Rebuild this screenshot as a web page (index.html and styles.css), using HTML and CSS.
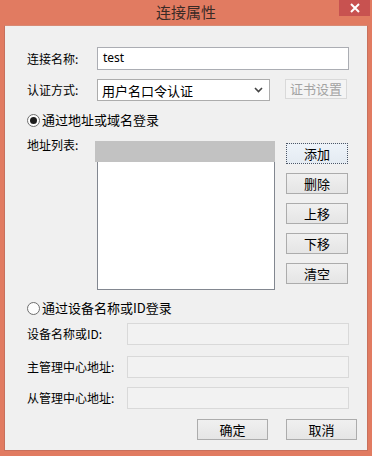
FILE: index.html
```html
<!DOCTYPE html>
<html lang="zh">
<head>
<meta charset="utf-8">
<title>连接属性</title>
<link rel="stylesheet" href="styles.css">
</head>
<body>
<div class="window">
  <div class="titlebar">
    <span class="title">连接属性</span>
    <div class="close">
      <svg width="10" height="10" viewBox="0 0 10 10"><path d="M1 1 L9 9 M9 1 L1 9" stroke="#fff" stroke-width="2"/></svg>
    </div>
  </div>
  <div class="content">
    <div class="row r1">
      <span class="lbl">连接名称:</span>
      <div class="input">test</div>
    </div>
    <div class="row r2">
      <span class="lbl">认证方式:</span>
      <div class="select">
        <span>用户名口令认证</span>
        <svg width="9" height="6" viewBox="0 0 9 6"><path d="M1 1 L4.5 4.5 L8 1" stroke="#444" stroke-width="1.6" fill="none"/></svg>
      </div>
      <div class="btn disabled cert">证书设置</div>
    </div>
    <div class="radio-row r3">
      <span class="radio checked"><span class="dot"></span></span>
      <span>通过地址或域名登录</span>
    </div>
    <div class="list-row">
      <span class="lbl list-lbl">地址列表:</span>
      <div class="listbox"><div class="lb-head"></div></div>
      <div class="btncol">
        <div class="btn focus">添加</div>
        <div class="btn">删除</div>
        <div class="btn">上移</div>
        <div class="btn">下移</div>
        <div class="btn">清空</div>
      </div>
    </div>
    <div class="radio-row r5">
      <span class="radio"></span>
      <span>通过设备名称或ID登录</span>
    </div>
    <div class="row wide r6">
      <span class="lbl">设备名称或ID:</span>
      <div class="input dis"></div>
    </div>
    <div class="row wide r7">
      <span class="lbl">主管理中心地址:</span>
      <div class="input dis"></div>
    </div>
    <div class="row wide r8">
      <span class="lbl">从管理中心地址:</span>
      <div class="input dis"></div>
    </div>
    <div class="footer">
      <div class="btn big">确定</div>
      <div class="btn big">取消</div>
    </div>
  </div>
</div>
</body>
</html>
```
FILE: styles.css
```css
* { box-sizing: border-box; }
html, body { margin: 0; padding: 0; }
body {
  width: 372px;
  height: 456px;
  font-family: "Noto Sans CJK SC", "Noto Sans", sans-serif;
  font-size: 12px;
  color: #000;
  overflow: hidden;
}
.window {
  width: 372px;
  height: 456px;
  background: #e17b61;
  padding: 0 4px 5px 4px;
  display: flex;
  flex-direction: column;
}
.titlebar {
  height: 25px;
  flex: none;
  display: flex;
  align-items: center;
  justify-content: center;
  position: relative;
}
.title {
  font-size: 15px;
  color: #3a2a26;
  line-height: 18px;
  margin-top: -1px;
}
.close {
  position: absolute;
  right: -2px;
  top: 0;
  width: 31px;
  height: 16px;
  background: #c85250;
  display: flex;
  align-items: center;
  justify-content: center;
}
.content {
  flex: 1;
  background: #f0f0f0;
  border: 1px solid #c8705c;
  border-top-color: #d88a74;
  padding: 21px 0 0 22px;
  display: flex;
  flex-direction: column;
}
.row {
  display: flex;
  align-items: center;
}
.lbl {
  width: 70px;
  flex: none;
  line-height: 14px;
  white-space: nowrap;
}
.wide .lbl { width: 100px; }
.input {
  height: 23px;
  width: 252px;
  background: #fff;
  border: 1px solid #abadb3;
  font-family: "Noto Sans", sans-serif;
  font-size: 12px;
  line-height: 19px;
  padding-left: 5px;
}
.r1 { margin-top: 0; }
.r2 { margin-top: 9px; }
.select {
  width: 173px;
  height: 22px;
  background: #fff;
  border: 1px solid #acacac;
  display: flex;
  align-items: center;
  justify-content: space-between;
  padding: 0 6px 0 4px;
  font-size: 13px;
}
.btn {
  width: 62px;
  height: 21px;
  border: 1px solid #acacac;
  background: linear-gradient(#f0f0f0, #e5e5e5);
  display: flex;
  align-items: center;
  justify-content: center;
  font-size: 13px;
  line-height: 14px;
}
.cert {
  margin-left: 15px;
  height: 20px;
  margin-top: -2px;
}
.btn.disabled {
  background: #f4f4f4;
  border-color: #d9d9d9;
  color: #a3a3a3;
}
.btn.focus {
  border: 1px dotted #4d5666;
  background: linear-gradient(#eef3f9, #e4ebf2);
}
.radio-row {
  display: flex;
  align-items: center;
  height: 14px;
  font-size: 13px;
  line-height: 14px;
}
.r3 { margin-top: 12px; }
.r5 { margin-top: 11px; }
.radio {
  width: 13px;
  height: 13px;
  border-radius: 50%;
  border: 1px solid #6e6e6e;
  background: #fdfdfd;
  display: flex;
  align-items: center;
  justify-content: center;
  margin-right: 2px;
  flex: none;
}
.radio .dot {
  width: 7px;
  height: 7px;
  border-radius: 50%;
  background: #1c1c1c;
}
.list-row {
  display: flex;
  align-items: flex-start;
  margin-top: 14px;
}
.list-lbl { margin-top: -3px; }
.listbox {
  width: 178px;
  height: 149px;
  background: #fff;
  border: 1px solid #828790;
}
.lb-head {
  height: 21px;
  background: #c2c2c2;
  margin: -1px -1px 0 -3px;
}
.btncol {
  margin-left: 11px;
  margin-top: 2px;
  display: flex;
  flex-direction: column;
  gap: 9px;
}
.wide .input { width: 222px; height: 22px; }
.input.dis {
  background: #f2f2f2;
  border-color: #d9d9d9;
}
.r6 { margin-top: 8px; }
.r7 { margin-top: 11px; }
.r8 { margin-top: 9px; }
.footer {
  display: flex;
  justify-content: flex-end;
  gap: 18px;
  margin-top: 10px;
  padding-right: 10px;
}
.btn.big {
  width: 71px;
  height: 21px;
}
```
